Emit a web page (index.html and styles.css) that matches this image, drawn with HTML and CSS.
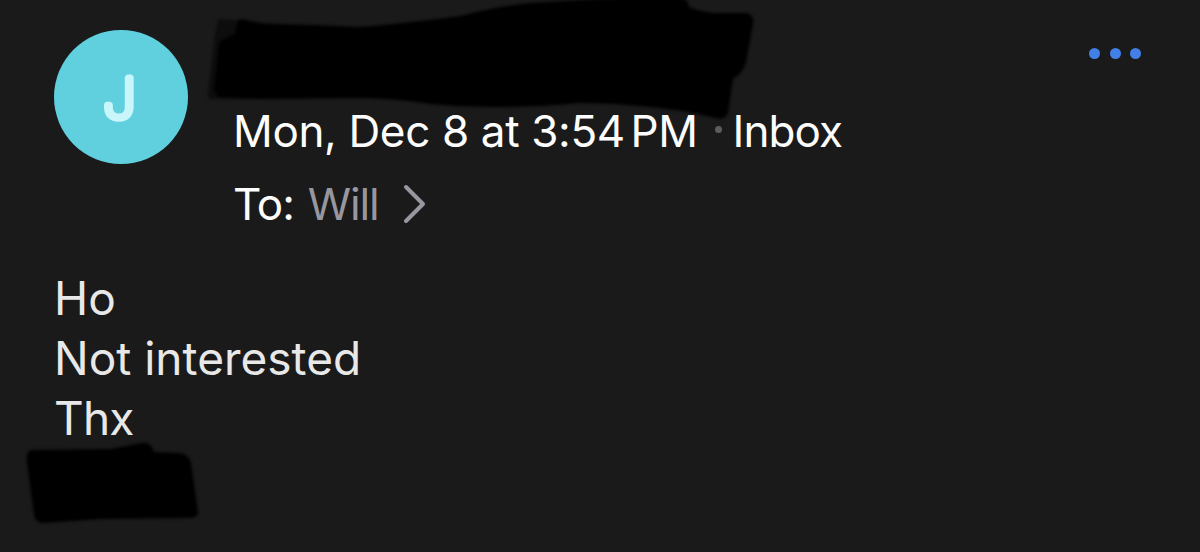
FILE: index.html
```
<!DOCTYPE html>
<html lang="en">

<head>
    <meta charset="UTF-8">
    <meta name="viewport" content="width=device-width, initial-scale=1.0">
    <title>Mail</title>
    <link rel="stylesheet" href="styles.css">
</head>

<body>
    <div class="mail">
        <div class="mailHeader">
            <svg class="avatar" viewBox="0 0 134 134">
                <circle cx="67" cy="67" r="67" />
                <text transform="translate(65.3 87.5) scale(1.07 1)" text-anchor="middle">J</text>
            </svg>
            <div class="mailInfo">
                <div class="sender">
                    <svg class="scribble" viewBox="0 0 560 130">
                        <path class="soft" d="M18 19 L60 22 L60 99 L12 99 Q7 99 8 92 L15 34 Z" />
                        <path d="M38 20 Q42 18 50 21 Q60 24 78 24 Q120 25 160 27 Q200 24 260 16 Q300 6 330 3 L400 -1 L478 -3 Q490 0 488 6 Q492 10 514 13 L546 13 Q555 15 553 24 L546 62 Q543 73 533 79 L528 113 Q525 121 515 118 Q480 109 440 106 Q410 103 380 103 Q340 107 290 107 Q260 107 230 104 Q200 99 165 98 L60 99 L18 97 L14 90 L19 42 L35 34 Z" />
                    </svg>
                </div>
                <div class="dateLine">
                    <span class="date">Mon, Dec 8 at 3:54<span class="thin">&#8239;</span>PM</span>
                    <span class="separator"></span>
                    <span class="folder">Inbox</span>
                </div>
                <div class="toLine">
                    <span class="toLabel">To:</span>
                    <span class="recipient">Will</span>
                    <svg class="chevron" viewBox="0 0 24 40">
                        <path d="M3 3 L20 20 L3 37" />
                    </svg>
                </div>
            </div>
            <button class="moreButton" aria-label="More">
                <span class="dot"></span>
                <span class="dot"></span>
                <span class="dot"></span>
            </button>
        </div>
        <div class="mailBody">
            <p>Ho</p>
            <p>Not interested</p>
            <p class="thanks">Thx</p>
            <svg class="signature" viewBox="0 0 180 90">
                <path d="M10 10 L90 9 L120 3 Q130 1 133 12 L158 13 Q168 14 170 23 L177 72 Q177 78 168 78 L80 79 L22 83 Q15 83 13 75 L6 22 Q5 11 10 10 Z" />
            </svg>
        </div>
    </div>
</body>

</html>
```

FILE: styles.css
```
* {
    margin: 0;
    padding: 0;
    box-sizing: border-box;
}

body {
    width: 100%;
    height: 100vh;
    overflow: hidden;
    background-color: #1a1a1a;
    font-family: Inter, "Liberation Sans", sans-serif;
    color: #fdfdfd;
}

.mail {
    width: 100%;
    padding: 30px 59px 0 54px;
}

.mailHeader {
    display: flex;
    align-items: flex-start;
}

.avatar {
    width: 134px;
    height: 134px;
    flex-shrink: 0;
}

.avatar circle {
    fill: #60d0df;
}

/* thin letter with a round stroke gives the rounded ends */
.avatar text {
    font-size: 54px;
    font-weight: 100;
    fill: #c9f6fa;
    stroke: #c9f6fa;
    stroke-width: 7px;
    stroke-linejoin: round;
}

.mailInfo {
    flex: 1;
    margin-left: 45px;
    font-size: 44px;
    line-height: 53px;
}

.sender {
    position: relative;
    height: 75px;
}

.scribble {
    position: absolute;
    left: -33px;
    top: -30px;
    width: 560px;
    height: 130px;
    overflow: visible;
    filter: blur(1.5px);
}

.scribble .soft {
    opacity: 0.5;
}

.dateLine {
    display: flex;
    align-items: center;
    white-space: nowrap;
}

.date {
    letter-spacing: -0.35px;
}

.thin {
    letter-spacing: -2.5px;
}

.folder {
    letter-spacing: -0.9px;
}

.separator {
    width: 7px;
    height: 7px;
    margin: 0 11px 4px 17px;
    border-radius: 50%;
    background-color: #5c5c60;
}

.toLine {
    display: flex;
    align-items: center;
    margin-top: 20px;
    letter-spacing: -1.1px;
}

.recipient {
    margin-left: 14px;
    color: #98979f;
}

.chevron {
    width: 24px;
    height: 40px;
    margin: -2px 0 0 24px;
    fill: none;
    stroke: #98979f;
    stroke-width: 4px;
    stroke-linecap: round;
    stroke-linejoin: round;
}

.moreButton {
    display: flex;
    gap: 9.5px;
    margin-top: 18px;
    border: none;
    background: none;
    cursor: pointer;
}

.dot {
    width: 11px;
    height: 11px;
    border-radius: 50%;
    background-color: #427fe6;
}

.mailBody {
    margin-top: 37px;
    font-size: 46px;
    line-height: 60px;
    color: #e8e8e8;
}

.thanks {
    letter-spacing: -0.8px;
}

.signature {
    display: block;
    width: 180px;
    height: 90px;
    margin: -8px 0 0 -33px;
    overflow: visible;
    filter: blur(1.5px);
}
```
